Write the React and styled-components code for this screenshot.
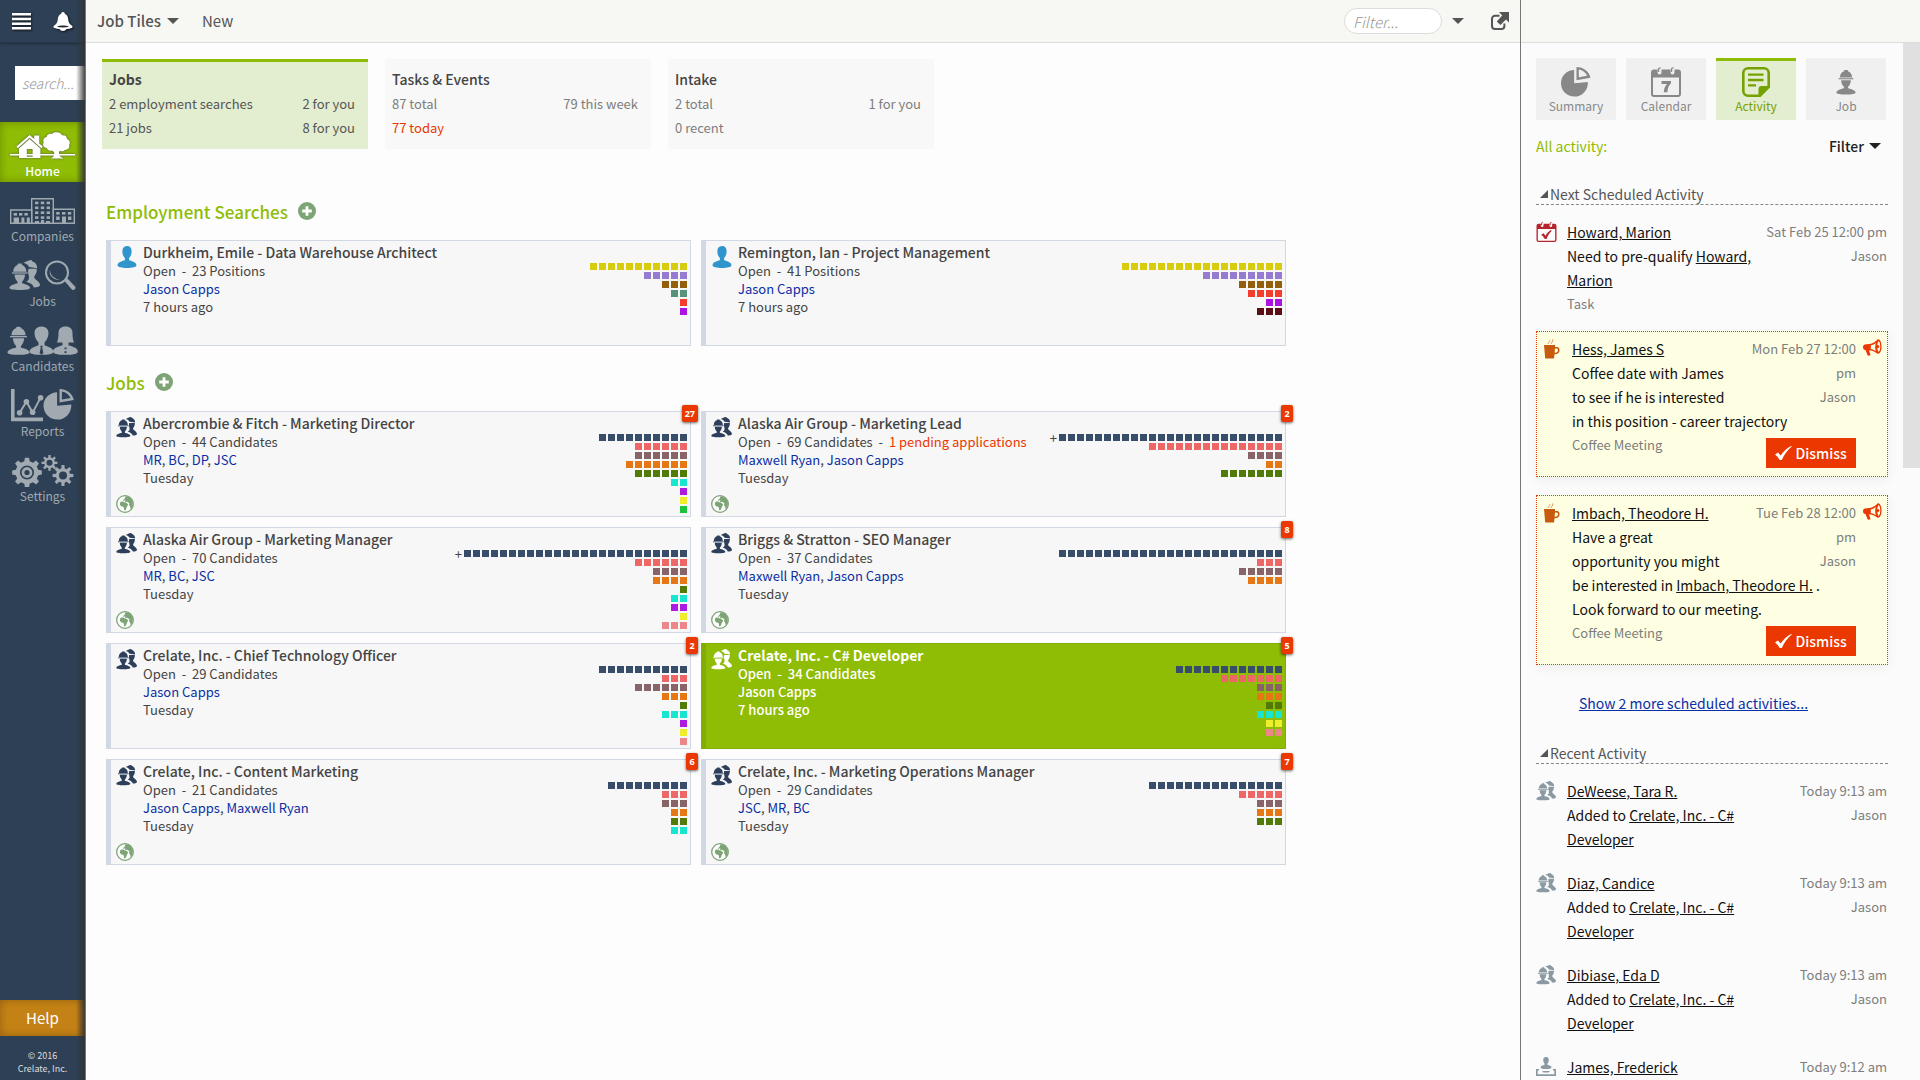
import React from "react";
import styled, { createGlobalStyle, css } from "styled-components";

const GlobalStyle = createGlobalStyle`
  *, *::before, *::after { box-sizing: border-box; }
  body {
    margin: 0;
    background: #fdfdfd;
    color: #444;
    font-family: "Noto Sans CJK SC", "Open Sans", sans-serif;
    font-size: 13px;
    line-height: 18px;
  }
  button, input { font: inherit; color: inherit; }
  button { padding: 0; border: 0; background: none; cursor: pointer; }
  h2, p, ul { margin: 0; padding: 0; }
  ul { list-style: none; }
  a { color: inherit; }
`;

/* ---------- icons ---------- */

const Svg = ({ w, h, box, children }) => (
  <svg width={w} height={h} viewBox={box} fill="currentColor" aria-hidden="true">
    {children}
  </svg>
);

const WorkerShape = () => (
  <>
    <path d="M4.6 9.6C4.8 5.6 7 3 9.6 2.2V1.2C10.2.5 13.8.5 14.4 1.2v1C17 3 19.2 5.6 19.4 9.6z" />
    <path d="M3.2 10.4h17.6v1.4H3.2z" />
    <path d="M6.2 12.8h11.6c0 4-1.9 6.6-3.3 8v1.6c3.4 1 9 2.4 9 5.2 0 1.8-4.6 2.4-11.5 2.4S.5 29.4.5 27.6c0-2.8 5.6-4.2 9-5.2v-1.6c-1.4-1.4-3.3-4-3.3-8z" />
  </>
);

const WorkerIcon = ({ w = 20, h = 29 }) => (
  <Svg w={w} h={h} box="0 0 24 30"><WorkerShape /></Svg>
);

const TeamShape = () => (
  <>
    <g transform="translate(0 3) scale(.9)"><WorkerShape /></g>
    <path d="M14.500 2.800 19.600.4l3-.4.6 1.200c3 1 5 3.400 5 7L20 7c-.8-2-3-3.600-5.500-4.200z" />
    <path d="M19.500 8.800h8.300c.2 3.200-.8 5.800-2.600 7.600l.4 2.200c2.400 2 5.600 4.400 5.400 6.600-.6 1.800-3.200 2.200-6.200 2.200-1-3-3.600-4.600-7.600-5.600 1.800-1.200 3-2.400 2.800-4.600-.2-2.800-1.600-4.800-.5-8.400z" />
  </>
);

const TeamIcon = ({ size = 21 }) => (
  <Svg w={size} h={size} box="0 0 31 31"><TeamShape /></Svg>
);

const PersonIcon = () => (
  <Svg w="22" h="22" box="-1.5 0 21 21">
    <path d="M9 0c3 0 4.400 2 4.400 5s-1 5-2.400 6.400v2.200c3 .8 7 1.800 7 4.800 0 1.800-4 2.600-9 2.600s-9-.8-9-2.600c0-3 4-4 7-4.800v-2.200C5.600 10 4.600 8 4.600 5S6 0 9 0z" />
  </Svg>
);

const GlobeIcon = () => (
  <Svg w="18" h="18" box="0 0 18 18">
    <circle cx="9" cy="9" r="8.300" fill="#fdfdfd" stroke="currentColor" strokeWidth="1.300" />
    <path d="M9.500 1.200c3-.2 6 1.800 7 5 .8 3 .2 6-1.600 8-.6-1-.4-2.400-1.200-3.200-1-.6-.6-1.800-.2-2.800-.8-.8-2-.6-2.600-1.600-.6.2-.8 1-1.600.8-.8-.4.4-1.400 0-2-.8-.2-1.400.8-2.200.4 0-1 1-1.400 1.600-2 .4-.8.400-1.800.8-2.600z" />
    <path d="M4.800 6.800c1.400-.6 3-.2 4.200.8 1.200.6 2.800.6 3 2 0 1.200-1 1.800-1.400 2.800-.4 1.200-.8 2.600-1.800 3.200-1-.6-.8-2-1-3-.4-1-1.200-1.200-2.200-1.200-1.200-.4-1.800-1.400-1.600-2.600 0-.8.200-1.600.8-2z" />
  </Svg>
);

const PlusIcon = () => (
  <Svg w="18" h="18" box="0 0 18 18">
    <circle cx="9" cy="9" r="9" />
    <path d="M7.600 4.200h2.800v3.400h3.400v2.800h-3.400v3.400H7.600v-3.400H4.200V7.600h3.400z" fill="#fff" />
  </Svg>
);

const MenuIcon = () => (
  <Svg w="19" h="17" box="0 0 19 17">
    <path d="M0 0h19v2.600H0zM0 4.700h19v2.600H0zM0 9.400h19V12H0zM0 14h19v2.600H0z" />
  </Svg>
);

const BellIcon = () => (
  <Svg w="20" h="19" box="0 0 20 19">
    <path fillRule="evenodd" d="M10 0c1.200 0 1.800.8 1.800 1.800C14.200 2.600 15 5 15.300 8c.3 2.600 1.300 4.200 3.700 5.800.8.600.8 1.800-.4 2.200-1.600.6-3.400.9-5.200 1.100C13 18.400 11.600 19 10 19s-3-.6-3.400-1.900C4.800 16.900 3 16.600 1.400 16 .2 15.600.2 14.400 1 13.800 3.400 12.200 4.400 10.600 4.700 8 5 5 5.800 2.600 8.200 1.800 8.200.8 8.800 0 10 0zM3.800 14.400c3.600 1.300 8.800 1.300 12.400 0-3.600-1.200-8.800-1.200-12.400 0z" />
  </Svg>
);

const HomeIcon = () => (
  <Svg w="65" h="28" box="0 0 65 28">
    <path d="M0 22h65v1.400H0z" />
    <path d="M6.400 14.600 19.600 3l4.600 4V3.400h5v8l3.600 3.200-1.400 1.600L19.600 5.800 7.800 16.200z" />
    <path fillRule="evenodd" d="M9 16.400 19.600 7l10.800 9.400V26H9zM16.800 17v7.800h5.800V17z" />
    <path d="M46.400.2c3 0 4.600 1.200 5.600 3 3-.4 5 1.200 5 3.800 2.600 1 3.600 3.600 2.200 5.800.6 2.800-1.200 5.200-4.400 5.200-1.200 1.400-3.400 1.800-4.600.8l-1.200 1c-.2 3 .6 4.600 4.200 6.600H40.800c3-1.600 4-3.600 3.400-6l-1.800-1.800c-3 .8-5.200-.6-5.600-2.600-3.400-.2-4.600-3.200-3-5.400-1.200-2.600.2-5 2.800-5.600C37.200 2.400 39.600 1.200 42 2 43 .8 44.600.2 46.400.2z" />
  </Svg>
);

const windows = (x0, y0, cols, rows, dx, dy) =>
  Array.from({ length: cols * rows }, (_, i) => (
    <rect key={`${x0}-${i}`} x={x0 + (i % cols) * dx} y={y0 + Math.floor(i / cols) * dy} width="3.400" height="2.600" />
  ));

const CompaniesIcon = () => (
  <Svg w="65" h="26" box="0 0 65 26">
    <g fill="none" stroke="currentColor" strokeWidth="1.400">
      <path d="M.7 25.300V12h21v13.300zM43.300 25.300V11.300h21v14z" />
      <path d="M21.700 25.300V.7h21.600v24.600z" />
    </g>
    {windows(25, 3.600, 3, 4, 5.800, 4.900)}
    {windows(3.600, 15, 3, 1, 5.400, 4)}
    {windows(46.200, 14, 3, 1, 5.800, 4)}
    <path d="M3.600 19.500H9V25H3.600zM11.400 19.500h3V25h-3zM16.800 19.500h3V25h-3zM25 23h4v2h-4zM31 22h3v3h-3zM36 23h4v2h-4zM46.200 18.500h3.400V22h-3.400zM52 18.500h4V25h-4zM58 18.500h3.400V22H58z" />
  </Svg>
);

const JobsIcon = () => (
  <Svg w="67" h="31" box="0 0 67 31">
    <TeamShape />
    <circle cx="48" cy="12.400" r="11" fill="none" stroke="currentColor" strokeWidth="2" />
    <path d="M41 9.500a8 8 0 0 0 10 9.800 9.500 9.500 0 0 1-10-9.800z" />
    <path d="m55.500 21 3-2.600 7.800 8.400c.8 2-1.200 3.800-3.200 3z" />
  </Svg>
);

const CandidatesIcon = () => (
  <Svg w="71" h="29" box="0 0 71 29">
    <g transform="scale(.96)"><WorkerShape /></g>
    <path fillRule="evenodd" d="M34.500.6c4.600 0 7.200 3 7 7-.2 4-2 7-4 9v2.600c3.200 1.400 8.600 2.800 9 6.200 0 2.400-4.600 3.400-12 3.400s-12-1-12-3.400c.4-3.400 5.800-4.800 9-6.200v-2.600c-2-2-3.800-5-4-9-.2-4 2.400-7 7-7zm-1.300 19.200.6 2-1.200 5.200 1.900 1.800 1.900-1.800-1.200-5.200.6-2z" />
    <path fillRule="evenodd" d="M58.500.6c4.400 0 7 2.400 7 6.400 0 3.800.2 6.600 1.600 9.400h-5.600v2.800c4.200 1.400 9.400 2.800 9.500 6.200 0 2.400-5 3.400-12.500 3.400S46 27.800 46 25.400c.1-3.400 5.300-4.800 9.500-6.200v-2.800h-5.600c1.400-2.800 1.600-5.600 1.600-9.400 0-4 2.600-6.400 7-6.400zm-1 20.800v1.800h2v-1.800zm0 3.800V27h2v-1.800z" />
  </Svg>
);

const PieShape = () => (
  <>
    <path d="M13.600 3.200v13.600l14.200-1.400C28.200 23.600 22 30.600 14 30.600S0 24.400 0 16.800 6 3.400 13.600 3.200z" />
    <path fillRule="evenodd" d="M16 0c7 .2 13 4.400 14.400 11L16 13.600zm2.400 2.600v8l8.600-1.500C25.600 5.800 22.400 3.200 18.400 2.600z" />
  </>
);

const ReportsIcon = () => (
  <Svg w="63" h="33" box="0 0 63 33">
    <path d="M0 0h3.600v28.600H32v3.600H0z" />
    <path d="m8.600 24 6.800-11.600 6.200 11.200 8-15" fill="none" stroke="currentColor" strokeWidth="2" />
    <circle cx="8.600" cy="23.800" r="2.800" /><circle cx="15.400" cy="12.800" r="2.800" />
    <circle cx="21.600" cy="23.200" r="2.800" /><circle cx="29.600" cy="8.800" r="2.800" />
    <g transform="translate(32.500 0)"><PieShape /></g>
  </Svg>
);

const gearPath = (cx, cy, outer, inner, teeth) => {
  const pts = [];
  const step = (Math.PI * 2) / teeth;
  for (let i = 0; i < teeth; i++) {
    const a = i * step;
    [[-0.300, inner], [-0.180, outer], [0.180, outer], [0.300, inner]].forEach(([t, r]) => {
      pts.push(`${(cx + r * Math.sin(a + t * step)).toFixed(2)} ${(cy - r * Math.cos(a + t * step)).toFixed(2)}`);
    });
  }
  return `M${pts.join("L")}z`;
};
const hole = (cx, cy, r) => `M${cx - r} ${cy}a${r} ${r} 0 1 0 ${2 * r} 0a${r} ${r} 0 1 0 ${-2 * r} 0z`;

const SettingsIcon = () => (
  <Svg w="62" h="32" box="0 0 62 32">
    <path fillRule="evenodd" d={gearPath(15, 17.500, 15, 11.500, 8) + hole(15, 17.500, 7)} />
    <circle cx="15" cy="17.500" r="4" fill="none" stroke="currentColor" strokeWidth="2.800" />
    <path fillRule="evenodd" d={gearPath(37.500, 7.800, 8, 5.400, 8) + hole(37.500, 7.800, 3)} />
    <path fillRule="evenodd" d={gearPath(51, 20.500, 10.500, 7.200, 8) + hole(51, 20.500, 4)} />
  </Svg>
);

const SummaryIcon = () => <Svg w="30" h="30" box="0 0 31 31"><PieShape /></Svg>;

const CalendarBase = () => (
  <>
    <path fillRule="evenodd" d="M3 2.500h3.500v3a2 2 0 0 0 4 0v-3h9v3a2 2 0 0 0 4 0v-3H27a3 3 0 0 1 3 3V27a3 3 0 0 1-3 3H3a3 3 0 0 1-3-3V5.500a3 3 0 0 1 3-3zM2 10.500V27a1 1 0 0 0 1 1h24a1 1 0 0 0 1-1V10.500z" />
    <path d="M7.500 5V2.500A1.500 1.500 0 0 1 9.500 1M20.500 5V2.500a1.500 1.500 0 0 1 2-1.500" fill="none" stroke="currentColor" strokeWidth="1.400" />
  </>
);

const CalendarIcon = () => (
  <Svg w="30" h="30" box="0 0 30 30">
    <CalendarBase />
    <path d="M10.500 14h9.500v2.200c-2.600 2.600-3.400 5.400-3.600 9h-3.600c.2-3.600 1.200-6 3.200-8.200h-5.500z" />
  </Svg>
);

const TaskIcon = () => (
  <Svg w="21" h="20" box="0 0 30 30">
    <CalendarBase />
    <path d="m7 19 3.500-2 3 3.500c2-3.600 4.600-6.400 8-8.500l1.200 1c-3 3-5.600 7-7.600 12.600h-2.600C11.300 23 9.500 20.600 7 19z" />
  </Svg>
);

const NoteIcon = () => (
  <Svg w="28" h="30" box="0 0 28 30">
    <path fillRule="evenodd" d="M6 0h16a6 6 0 0 1 6 6v14.500L18.500 30H6a6 6 0 0 1-6-6V6a6 6 0 0 1 6-6zm0 2.600A3.400 3.400 0 0 0 2.600 6v18A3.400 3.400 0 0 0 6 27.400h10.500V22a3 3 0 0 1 3-3h5.900V6A3.400 3.400 0 0 0 22 2.600z" />
    <path d="M6 6.400h15.500v2.400H6zM6 11.800h15.500v2.400H6zM6 17.200h8v2.400H6z" />
  </Svg>
);

const CoffeeIcon = () => (
  <Svg w="16" h="20" box="0 0 16 20">
    <path fillRule="evenodd" d="M0 6h11v2h1.800c2 0 3 1.600 2.700 3.800-.3 2.400-2 3.600-5 3.400L10 19.500H1.200zm11 3.400-.4 4.400c2 .2 3-.4 3.300-2.200.2-1.400-.2-2.200-1.500-2.200z" />
    <path d="M4 5C3.600 3.400 6.400 3 6 1.200M7 5c0-1.400 2.200-2 1.800-4.600" fill="none" stroke="currentColor" strokeWidth="1" opacity="0.6" />
  </Svg>
);

const MegaphoneIcon = () => (
  <Svg w="19" h="17" box="0 0 19 17">
    <path fillRule="evenodd" d="M14.600.2c2.400-.6 4 3.200 4 7.400s-1.600 7.600-4 7.200C12.600 13 10.400 11.800 8 11.400l-2 .1 1.600 4.700-2.800.6-2.200-5.500C.8 10.800 0 9.600 0 8.200s.6-2.500 2-2.700l6-.7C10.600 3.800 13 2.200 14.600.2zM7.800 6.400v3.600c1.800.4 3.600 1.200 5 2.200-.8-2.600-.8-5.400 0-8.200-1.400 1.100-3 2-5 2.400zM15.600 2c-1.800 2.800-1.800 8.200 0 11 2.200-1.800 2.200-9 0-11z" />
    <circle cx="14.800" cy="7.600" r="1.500" />
  </Svg>
);

const CheckIcon = () => (
  <Svg w="17" h="14" box="0 0 17 14">
    <path d="m0 8.400 3-2 2.600 3.200C8.200 5.600 12 2 16.200 0l.6.600C12.600 4 9.200 8.600 6.800 14H4.600C3.600 11.800 2 9.800 0 8.400z" />
  </Svg>
);

const IntakeIcon = () => (
  <Svg w="20" h="19" box="0 0 20 19">
    <path d="M10 0c1.800 0 2.800 1.200 2.800 3S12 5.800 11.400 6.800v1c2 .5 4 1 4 2.600 0 1.200-2.400 1.600-5.400 1.600s-5.400-.4-5.400-1.600c0-1.600 2-2.100 4-2.600v-1C8 5.800 7.200 4.800 7.200 3S8.200 0 10 0z" />
    <path d="M0 12h3v1.600H1.700v3.600h16.600v-3.600H17V12h3v7H0zM6 14h8l-1.400 1.600H7.400z" />
  </Svg>
);

const OpenIcon = () => (
  <Svg w="18" h="18" box="0 0 18 18">
    <path d="M8.500 3.800H4a3 3 0 0 0-3 3V14a3 3 0 0 0 3 3h6.400a3 3 0 0 0 3-3v-2.500" fill="none" stroke="currentColor" strokeWidth="2" />
    <path d="M8 0h10v10.400l-3-3-5.600 5.600-3.600-3.600 5.400-5.800z" />
  </Svg>
);

const Caret = styled.span`
  border: 6px solid transparent;
  border-top-color: currentColor;
  border-bottom: 0;
`;

const CornerMark = () => (
  <Svg w="8" h="8" box="0 0 8 8"><path d="M8 0v8H0z" /></Svg>
);

/* ---------- frame ---------- */

const Frame = styled.div`
  display: flex;
  height: 100vh;
  overflow: hidden;
`;

const Sidebar = styled.nav`
  position: relative;
  display: flex;
  flex-direction: column;
  flex: none;
  width: 86px;
  overflow: hidden;
  background: #2d4055;
  color: #a1a9b1;
  border-right: 1px solid #777;
  &::after {
    content: "";
    position: absolute;
    inset: 0 0 0 auto;
    width: 9px;
    background: linear-gradient(to right, rgba(51, 51, 51, 0), rgba(51, 51, 51, 0.9));
    pointer-events: none;
  }
`;

const SidebarTop = styled.div`
  display: flex;
  align-items: center;
  justify-content: space-between;
  height: 43px;
  padding: 0 12px;
  color: #fff;
  border-bottom: 1px solid #25364a;
  box-shadow: 0 1px 3px rgba(0, 0, 0, 0.3);
  svg { display: block; filter: drop-shadow(1px 1px 1px #111); }
`;

const SearchBox = styled.input`
  flex: none;
  width: 80px;
  height: 34px;
  margin: 23px 0 22px 15px;
  padding: 0 7px;
  border: 0;
  border-radius: 0;
  background: #fff;
  font-size: 14px;
  font-style: italic;
  font-weight: 300;
  &::placeholder { color: #999; opacity: 1; }
`;

const NavList = styled.ul`
  flex: 1;
`;

const NavLink = styled.a`
  display: flex;
  flex-direction: column;
  align-items: center;
  justify-content: flex-end;
  height: 60px;
  margin-bottom: 5px;
  padding-bottom: 2px;
  font-size: 12px;
  text-decoration: none;
  ${({ $active }) => $active && css`
    color: #fff;
    font-weight: 500;
    background: #8fbc04;
    box-shadow: inset 0 0 8px #6b8d03;
    svg { filter: drop-shadow(0 0 1px #555); }
  `}
`;

const NavIcon = styled.span`
  display: flex;
  align-items: center;
  height: 36px;
  padding-top: 3px;
`;

const HelpButton = styled.button`
  height: 36px;
  background: #c48216;
  color: #fff;
  font-size: 15px;
  box-shadow: inset 0 0 8px #915f0d;
`;

const Copyright = styled.p`
  padding: 13px 0 5px;
  color: #ddd;
  font-size: 9px;
  line-height: 13px;
  text-align: center;
`;

const Main = styled.main`
  flex: 1;
  min-width: 0;
`;

const Bar = styled.header`
  display: flex;
  align-items: center;
  height: 43px;
  padding: 0 11px;
  background: #f7f8f3;
  border-bottom: 1px solid #ddd;
  color: #555;
  font-size: 15px;
`;

const BarButton = styled.button`
  display: flex;
  align-items: center;
  gap: 6px;
  margin-right: ${({ $gap }) => $gap || 0}px;
  font-weight: ${({ $strong }) => ($strong ? 500 : 400)};
  svg { display: block; }
`;

const FilterBox = styled.input`
  width: 98px;
  height: 26px;
  margin: 0 10px 0 auto;
  padding: 0 8px;
  border: 1px solid #ddd;
  border-radius: 13px;
  background: #fff;
  font-size: 15px;
  font-style: italic;
  font-weight: 300;
  &::placeholder { color: #999; opacity: 1; }
`;

/* ---------- summary tiles ---------- */

const StatGrid = styled.div`
  display: grid;
  grid-template-columns: repeat(3, minmax(0, 266px));
  gap: 17px;
  padding: 16px;
`;

const StatTile = styled.button`
  display: flex;
  flex-direction: column;
  gap: 6px;
  height: 90px;
  padding: 8px 13px 0 7px;
  text-align: left;
  background: ${({ $active }) => ($active ? "#e3edcf" : "#f8f8f8")};
  border-top: 3px solid ${({ $active }) => ($active ? "#8fbc04" : "#f8f8f8")};
  color: ${({ $active }) => ($active ? "#555" : "#7d7d7d")};
`;

const StatTitle = styled.span`
  margin-bottom: 1px;
  color: #444;
  font-size: 14px;
  font-weight: ${({ $active }) => ($active ? 700 : 500)};
`;

const StatRow = styled.span`
  display: flex;
  justify-content: space-between;
  align-self: stretch;
  color: ${({ $alert }) => ($alert ? "#ea3800" : "inherit")};
`;

/* ---------- job tiles ---------- */

const Section = styled.section`
  padding: 0 20px;
  margin-top: ${({ $first }) => ($first ? 33 : 23)}px;
`;

const SectionHead = styled.div`
  display: flex;
  align-items: center;
  gap: 10px;
  height: 28px;
  margin-bottom: 14px;
  color: #7ca475;
  button { padding-bottom: 3px; }
  svg { display: block; }
`;

const SectionTitle = styled.h2`
  color: #8fbc04;
  font-size: 17px;
  font-weight: 500;
`;

const TileGrid = styled.ul`
  display: grid;
  grid-template-columns: repeat(2, minmax(0, 585px));
  gap: 10px;
`;

const Tile = styled.li`
  position: relative;
  display: flex;
  height: 106px;
  padding: 2px 3px 3px 5px;
  border: 1px solid #d2d8e3;
  border-left-width: 5px;
  background: #f7f7f7;
  ${({ $active }) => $active && css`
    background: #8fbc04;
    border-color: #82ad02;
    color: #fff;
    font-weight: 500;
  `}
`;

const TileIcons = styled.div`
  display: flex;
  flex-direction: column;
  justify-content: space-between;
  width: 27px;
  padding-top: 3px;
  color: ${({ $tone }) => $tone};
  svg { display: block; }
`;

const GlobeSlot = styled.span`
  color: #7ca475;
`;

const TileText = styled.div`
  flex: 1;
  white-space: nowrap;
`;

const TileTitle = styled.p`
  font-size: 14px;
  font-weight: ${({ $active }) => ($active ? 700 : 500)};
  line-height: 19px;
`;

const Owner = styled.a`
  color: ${({ $active }) => ($active ? "#fff" : "#0a2ea4")};
  text-decoration: none;
`;

const Alert = styled.span`
  color: #ea3800;
`;

const Chart = styled.div`
  display: flex;
  flex-direction: column;
  gap: 2px;
  padding-top: 20px;
`;

const ChartRow = styled.div`
  display: flex;
  justify-content: flex-end;
  align-items: center;
  gap: 2px;
  height: 7px;
`;

const Dot = styled.span`
  width: 7px;
  height: 7px;
  background: ${({ $color }) => $color};
`;

const Badge = styled.span`
  position: absolute;
  top: -7px;
  right: -8px;
  min-width: 12px;
  height: 17px;
  padding: 0 3px;
  border-radius: 2px;
  background: #ea3800;
  box-shadow: 0 1px 3px rgba(0, 0, 0, 0.6);
  color: #fff;
  font-family: "Open Sans", sans-serif;
  font-size: 9px;
  font-weight: 700;
  line-height: 17px;
  text-align: center;
`;

/* ---------- activity panel ---------- */

const Panel = styled.aside`
  display: flex;
  flex-direction: column;
  flex: none;
  width: 400px;
  border-left: 1px solid #777;
  background: #fbfbfb;
`;

const PanelBody = styled.div`
  display: flex;
  flex: 1;
  min-height: 0;
`;

const PanelContent = styled.div`
  flex: 1;
  overflow: hidden;
  padding: 15px;
`;

const ScrollTrack = styled.div`
  width: 17px;
  background: #fbfbfb;
`;

const ScrollThumb = styled.div`
  height: 41%;
  background: #e0e0e0;
`;

const Tabs = styled.div`
  display: grid;
  grid-template-columns: repeat(4, 80px);
  gap: 10px;
`;

const Tab = styled.button`
  display: flex;
  flex-direction: column;
  align-items: center;
  height: 62px;
  padding-top: 6px;
  font-size: 12px;
  background: ${({ $active }) => ($active ? "#e3edcf" : "#f0f0f0")};
  border-top: 3px solid ${({ $active }) => ($active ? "#8fbc04" : "#f0f0f0")};
  color: ${({ $active }) => ($active ? "#76a102" : "#888")};
  svg { display: block; }
`;

const PanelHead = styled.div`
  display: flex;
  align-items: baseline;
  justify-content: space-between;
  height: 54px;
  padding: 17px 7px 0 0;
  color: #8fbc04;
  font-size: 14px;
`;

const PanelFilter = styled.button`
  display: flex;
  align-items: center;
  gap: 5px;
  color: #222;
  font-weight: 500;
`;

const GroupHead = styled.button`
  display: flex;
  align-items: center;
  gap: 2px;
  width: 100%;
  height: 20px;
  margin: ${({ $top }) => $top}px 0 15px;
  padding: 0 0 2px 4px;
  border-bottom: 1px dashed #888;
  color: #555;
  font-size: 14px;
  svg { display: block; }
`;

const Entry = styled.li`
  display: grid;
  grid-template-columns: ${({ $card }) => ($card ? "28px 1fr 31px" : "31px 1fr")};
  font-size: 14px;
  line-height: 24px;
  color: #111;
  margin-bottom: ${({ $last }) => ($last ? 15 : 20)}px;
  padding-right: 1px;
  ${({ $card }) => $card && css`
    margin-bottom: 18px;
    padding: 5px 0 8px 7px;
    border: 1px dotted #ea3800;
    background: #feffe2;
    box-shadow: 0 3px 10px rgba(0, 0, 0, 0.06);
  `}
`;

const EntryIcon = styled.span`
  padding-top: 2px;
  color: ${({ $tone }) => $tone};
  svg { display: block; }
`;

const MegaphoneSlot = styled.span`
  justify-self: end;
  padding: 2px 5px 0 0;
  color: #ea3800;
  svg { display: block; }
`;

const Meta = styled.span`
  float: right;
  width: 128px;
  padding-left: ${({ $card }) => ($card ? 8 : 0)}px;
  color: #7d7d7d;
  font-size: 13px;
  text-align: right;
`;

const MetaLine = styled.span`
  display: block;
`;

const EntryFoot = styled.div`
  display: flex;
  align-items: flex-start;
  justify-content: space-between;
  color: #7d7d7d;
  font-size: 13px;
`;

const Dismiss = styled.button`
  display: flex;
  align-items: center;
  justify-content: center;
  gap: 3px;
  width: 90px;
  height: 30px;
  margin-top: 5px;
  background: #ea3800;
  color: #fff;
  font-size: 14px;
  font-weight: 500;
`;

const MoreLink = styled.a`
  display: block;
  margin-top: 26px;
  padding-right: 37px;
  color: #0a2ea4;
  font-size: 14px;
  line-height: 24px;
  text-align: center;
`;

/* ---------- data ---------- */

const NAV = [
  ["Home", HomeIcon], ["Companies", CompaniesIcon], ["Jobs", JobsIcon],
  ["Candidates", CandidatesIcon], ["Reports", ReportsIcon], ["Settings", SettingsIcon],
];

const NAVY = "#374d69", ROSE = "#ee6767", MAUVE = "#876468", ORANGE = "#e57814", OLIVE = "#527a09",
  CYAN = "#17e5d0", VIOLET = "#ad1be3", YELLOW = "#efee2c", GREEN = "#1bc23c", PINK = "#ec8688";

const STAGES = [NAVY, ROSE, MAUVE, ORANGE, OLIVE, CYAN];
const stages = (counts, ...extra) => [...counts.map((n, i) => [STAGES[i], n]), ...extra];

const SEARCHES = [
  { title: "Durkheim, Emile - Data Warehouse Architect", status: "23 Positions", owners: ["Jason Capps"], when: "7 hours ago",
    rows: [["#d7cd0c", 11], ["#967cd0", 5], ["#945f0c", 3], ["#56937a", 2], ["#f33e2e", 1], ["#a914e0", 1]] },
  { title: "Remington, Ian - Project Management", status: "41 Positions", owners: ["Jason Capps"], when: "7 hours ago",
    rows: [["#d7cd0c", 18], ["#967cd0", 9], ["#945f0c", 5], ["#f33e2e", 4], ["#a914e0", 2], ["#5a0f14", 3]] },
];

const JOBS = [
  { title: "Abercrombie & Fitch - Marketing Director", status: "44 Candidates", owners: ["MR", "BC", "DP", "JSC"], when: "Tuesday", badge: 27, globe: true,
    rows: stages([10, 6, 6, 7, 6, 2], [VIOLET, 1], [YELLOW, 1], [GREEN, 1]) },
  { title: "Alaska Air Group - Marketing Lead", status: "69 Candidates", pending: "1 pending applications", owners: ["Maxwell Ryan", "Jason Capps"], when: "Tuesday", badge: 2, globe: true, more: true,
    rows: stages([25, 15, 4, 2, 7]) },
  { title: "Alaska Air Group - Marketing Manager", status: "70 Candidates", owners: ["MR", "BC", "JSC"], when: "Tuesday", globe: true, more: true,
    rows: stages([25, 6, 4, 4, 1, 2], [VIOLET, 2], [YELLOW, 1], [PINK, 3]) },
  { title: "Briggs & Stratton - SEO Manager", status: "37 Candidates", owners: ["Maxwell Ryan", "Jason Capps"], when: "Tuesday", badge: 8, globe: true,
    rows: stages([25, 3, 5, 4]) },
  { title: "Crelate, Inc. - Chief Technology Officer", status: "29 Candidates", owners: ["Jason Capps"], when: "Tuesday", badge: 2,
    rows: stages([10, 3, 6, 3, 1, 3], [VIOLET, 1], [YELLOW, 1], [PINK, 1]) },
  { title: "Crelate, Inc. - C# Developer", status: "34 Candidates", owners: ["Jason Capps"], when: "7 hours ago", badge: 5, active: true,
    rows: stages([12, 7, 3, 3, 2, 3], [YELLOW, 2], [PINK, 2]) },
  { title: "Crelate, Inc. - Content Marketing", status: "21 Candidates", owners: ["Jason Capps", "Maxwell Ryan"], when: "Tuesday", badge: 6, globe: true,
    rows: stages([9, 3, 3, 2, 2, 2]) },
  { title: "Crelate, Inc. - Marketing Operations Manager", status: "29 Candidates", owners: ["JSC", "MR", "BC"], when: "Tuesday", badge: 7, globe: true,
    rows: stages([15, 5, 3, 3, 3]) },
];

const RECENT = ["DeWeese, Tara R.", "Diaz, Candice", "Dibiase, Eda D"];

/* ---------- parts ---------- */

const JobTile = ({ job, person }) => (
  <Tile $active={job.active}>
    <TileIcons $tone={job.active ? "#fff" : person ? "#2f95cc" : "#2d3f5b"}>
      {person ? <PersonIcon /> : <TeamIcon />}
      {job.globe && <GlobeSlot><GlobeIcon /></GlobeSlot>}
    </TileIcons>
    <TileText>
      <TileTitle $active={job.active}>{job.title}</TileTitle>
      <p>
        Open&nbsp; -&nbsp; {job.status}
        {job.pending && <>&nbsp; -&nbsp; <Alert>{job.pending}</Alert></>}
      </p>
      <p>
        {job.owners.map((name, i) => (
          <React.Fragment key={name}>
            {i > 0 && ", "}
            <Owner href="#owner" $active={job.active}>{name}</Owner>
          </React.Fragment>
        ))}
      </p>
      <p>{job.when}</p>
    </TileText>
    <Chart>
      {job.rows.map(([color, count], r) => (
        <ChartRow key={r}>
          {r === 0 && job.more && <span>+</span>}
          {Array.from({ length: count }, (_, i) => <Dot key={i} $color={color} />)}
        </ChartRow>
      ))}
    </Chart>
    {job.badge && <Badge>{job.badge}</Badge>}
  </Tile>
);

const Activity = ({ icon, tone, name, meta, children, foot, card, last }) => (
  <Entry $card={card} $last={last}>
    <EntryIcon $tone={tone}>{icon}</EntryIcon>
    <div>
      <Meta $card={card}>
        {meta.map((line) => <MetaLine key={line}>{line}</MetaLine>)}
      </Meta>
      <a href="#contact">{name}</a>
      {children && <p>{children}</p>}
      {foot && (
        <EntryFoot>
          <span>{foot}</span>
          {card && <Dismiss><CheckIcon />Dismiss</Dismiss>}
        </EntryFoot>
      )}
    </div>
    {card && <MegaphoneSlot><MegaphoneIcon /></MegaphoneSlot>}
  </Entry>
);

export default function App() {
  return (
    <Frame>
      <GlobalStyle />
      <Sidebar aria-label="Main">
        <SidebarTop>
          <button aria-label="Menu"><MenuIcon /></button>
          <button aria-label="Notifications"><BellIcon /></button>
        </SidebarTop>
        <SearchBox placeholder="search..." aria-label="Search" />
        <NavList>
          {NAV.map(([label, Icon], i) => (
            <li key={label}>
              <NavLink href={`#${label.toLowerCase()}`} $active={i === 0}>
                <NavIcon><Icon /></NavIcon>
                {label}
              </NavLink>
            </li>
          ))}
        </NavList>
        <HelpButton>Help</HelpButton>
        <Copyright>© 2016<br />Crelate, Inc.</Copyright>
      </Sidebar>

      <Main>
        <Bar>
          <BarButton $strong $gap={23}>Job Tiles <Caret /></BarButton>
          <BarButton>New</BarButton>
          <FilterBox placeholder="Filter..." aria-label="Filter tiles" />
          <BarButton $gap={27} aria-label="Filter options"><Caret /></BarButton>
          <BarButton aria-label="Open in new window"><OpenIcon /></BarButton>
        </Bar>

        <StatGrid>
          <StatTile $active>
            <StatTitle $active>Jobs</StatTitle>
            <StatRow><span>2 employment searches</span><span>2 for you</span></StatRow>
            <StatRow><span>21 jobs</span><span>8 for you</span></StatRow>
          </StatTile>
          <StatTile>
            <StatTitle>Tasks &amp; Events</StatTitle>
            <StatRow><span>87 total</span><span>79 this week</span></StatRow>
            <StatRow $alert><span>77 today</span></StatRow>
          </StatTile>
          <StatTile>
            <StatTitle>Intake</StatTitle>
            <StatRow><span>2 total</span><span>1 for you</span></StatRow>
            <StatRow><span>0 recent</span></StatRow>
          </StatTile>
        </StatGrid>

        <Section $first>
          <SectionHead>
            <SectionTitle>Employment Searches</SectionTitle>
            <button aria-label="Add employment search"><PlusIcon /></button>
          </SectionHead>
          <TileGrid>
            {SEARCHES.map((job) => <JobTile key={job.title} job={job} person />)}
          </TileGrid>
        </Section>

        <Section>
          <SectionHead>
            <SectionTitle>Jobs</SectionTitle>
            <button aria-label="Add job"><PlusIcon /></button>
          </SectionHead>
          <TileGrid>
            {JOBS.map((job) => <JobTile key={job.title} job={job} />)}
          </TileGrid>
        </Section>
      </Main>

      <Panel>
        <Bar />
        <PanelBody>
          <PanelContent>
            <Tabs>
              <Tab><SummaryIcon />Summary</Tab>
              <Tab><CalendarIcon />Calendar</Tab>
              <Tab $active><NoteIcon />Activity</Tab>
              <Tab><WorkerIcon w={20} h={30} />Job</Tab>
            </Tabs>
            <PanelHead>
              <span>All activity:</span>
              <PanelFilter>Filter <Caret /></PanelFilter>
            </PanelHead>

            <GroupHead $top={11}><CornerMark />Next Scheduled Activity</GroupHead>
            <ul>
              <Activity last icon={<TaskIcon />} tone="#b3242b" name="Howard, Marion" meta={["Sat Feb 25 12:00 pm", "Jason"]} foot="Task">
                Need to pre-qualify <a href="#contact">Howard, Marion</a>
              </Activity>
              <Activity card icon={<CoffeeIcon />} tone="#c75a0c" name="Hess, James S" meta={["Mon Feb 27 12:00 pm", "Jason"]} foot="Coffee Meeting">
                Coffee date with James to see if he is interested in this position - career trajectory
              </Activity>
              <Activity card icon={<CoffeeIcon />} tone="#c75a0c" name="Imbach, Theodore H." meta={["Tue Feb 28 12:00 pm", "Jason"]} foot="Coffee Meeting">
                Have a great opportunity you might be interested in <a href="#contact">Imbach, Theodore H.</a> . Look&nbsp;forward to our meeting.
              </Activity>
            </ul>
            <MoreLink href="#scheduled">Show 2 more scheduled activities...</MoreLink>

            <GroupHead $top={29}><CornerMark />Recent Activity</GroupHead>
            <ul>
              {RECENT.map((name) => (
                <Activity key={name} icon={<TeamIcon size={20} />} tone="#8b99a3" name={name} meta={["Today 9:13 am", "Jason"]}>
                  Added to <a href="#job">Crelate, Inc. - C# Developer</a>
                </Activity>
              ))}
              <Activity icon={<IntakeIcon />} tone="#8b99a3" name="James, Frederick" meta={["Today 9:12 am"]} />
            </ul>
          </PanelContent>
          <ScrollTrack><ScrollThumb /></ScrollTrack>
        </PanelBody>
      </Panel>
    </Frame>
  );
}
